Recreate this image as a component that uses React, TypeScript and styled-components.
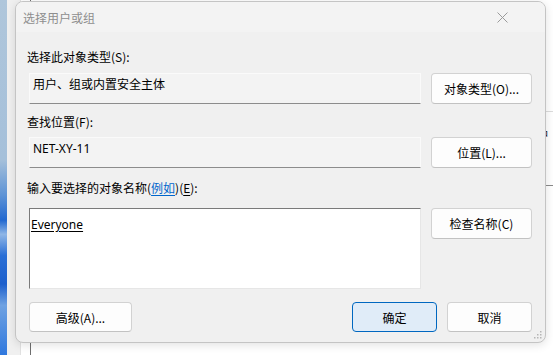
import React from 'react';
import styled, { createGlobalStyle } from 'styled-components';

const GlobalStyle = createGlobalStyle`
  html, body {
    margin: 0;
    padding: 0;
    width: 553px;
    height: 355px;
    overflow: hidden;
  }
  body {
    font-family: "Noto Sans", "Noto Sans CJK SC", sans-serif;
    font-size: 12px;
    color: #000;
  }
`;

const Desktop = styled.div`
  position: relative;
  width: 553px;
  height: 355px;
  overflow: hidden;
  background: linear-gradient(
    180deg,
    #afc6db 0%,
    #a5c0da 45%,
    #5d93d6 55%,
    #2268d0 62%,
    #8fb6e6 66%,
    #2a6fd6 72%,
    #1c5fcc 80%,
    #6fa2e2 86%,
    #2f78de 100%
  );
`;

// window lying behind the dialog
const BackWindow = styled.div`
  position: absolute;
  left: 7px;
  top: 0;
  right: -20px;
  bottom: 0;
  background: #f0f0f0;
`;

const BackPanel = styled.div`
  position: absolute;
  left: 13px;
  top: 0;
  right: 0;
  bottom: 0;
  background: #fff;
  border-left: 1px solid #e1e1e1;
`;

const BackList = styled.div`
  position: absolute;
  left: 9px;
  top: 0;
  right: 0;
  bottom: 0;
  border-left: 1px solid #6e6e6e;
`;

const BackRule = styled.div<{ $top: number; $dark?: boolean }>`
  position: absolute;
  left: 0;
  right: 0;
  top: ${(p) => p.$top}px;
  height: 1px;
  background: ${(p) => (p.$dark ? '#8a8a8a' : '#dcdcdc')};
`;

const BackColumn = styled.div`
  position: absolute;
  left: 518px;
  top: 204px;
  display: flex;
  flex-direction: column;
`;

const BackItem = styled.div`
  height: 21px;
  line-height: 21px;
  color: #1a1a40;
  font-size: 12px;
  white-space: nowrap;
`;

const BackHeading = styled.div`
  position: absolute;
  left: 518px;
  top: 128px;
  line-height: 16px;
  color: #222;
  white-space: nowrap;
`;

const Dialog = styled.div`
  position: absolute;
  left: 15px;
  top: 1px;
  width: 529px;
  height: 340px;
  background: #f0f0f0;
  border: 1px solid #c4c4c4;
  border-radius: 8px;
  box-shadow: 0 2px 10px rgba(0, 0, 0, 0.12);
  display: flex;
  flex-direction: column;
  overflow: hidden;
`;

const TitleBar = styled.div`
  height: 30px;
  flex: none;
  display: flex;
  align-items: center;
  justify-content: space-between;
  padding-left: 7px;
  background: #f3f3f3;
`;

const TitleText = styled.span`
  font-family: "Noto Sans CJK SC", sans-serif;
  font-size: 12px;
  line-height: 16px;
  color: #8e8e8e;
  margin-top: 1px;
`;

const CloseButton = styled.div`
  width: 12px;
  height: 12px;
  margin-right: 37px;
  margin-top: 1px;
  display: flex;
  align-items: center;
  justify-content: center;
`;

const Body = styled.div`
  flex: 1;
  display: flex;
  flex-direction: column;
  padding: 17px 12px 0 11px;
  position: relative;
`;

const Label = styled.div<{ $gap?: number }>`
  font-family: "Noto Sans CJK SC", sans-serif;
  line-height: 16px;
  height: 16px;
  margin-top: ${(p) => p.$gap ?? 0}px;
  white-space: nowrap;
`;

const Row = styled.div<{ $gap: number }>`
  display: grid;
  grid-template-columns: 392px 101px;
  column-gap: 10px;
  align-items: start;
  margin-top: ${(p) => p.$gap}px;
  margin-left: 2px;
`;

const ReadOnlyField = styled.div`
  box-sizing: border-box;
  height: 31px;
  padding: 3px 0 0 3px;
  background: #f3f3f3;
  border: 1px solid #fafafa;
  border-bottom-color: #8c8c8c;
  line-height: 16px;
  white-space: nowrap;
`;

const NameBox = styled.div`
  box-sizing: border-box;
  height: 81px;
  padding: 8px 0 0 1px;
  background: #fff;
  border: 1px solid #e6e6e6;
  border-top-color: #7a7a7a;
  border-left-color: #7a7a7a;
  line-height: 16px;
`;

const Resolved = styled.span`
  text-decoration: underline;
  text-underline-offset: 2px;
`;

const Button = styled.div<{ $width?: number; $primary?: boolean; $height?: number }>`
  box-sizing: border-box;
  width: ${(p) => (p.$width ? `${p.$width}px` : '100%')};
  height: ${(p) => p.$height ?? 31}px;
  display: flex;
  align-items: center;
  justify-content: center;
  font-family: "Noto Sans CJK SC", sans-serif;
  font-size: 12px;
  color: #000;
  background: ${(p) => (p.$primary ? '#e0ecf8' : '#fdfdfd')};
  border: 1px solid ${(p) => (p.$primary ? '#0067c0' : '#d2d2d2')};
  border-bottom-color: ${(p) => (p.$primary ? '#0067c0' : '#c2c2c2')};
  border-radius: 4px;
  white-space: nowrap;
`;

const Footer = styled.div`
  display: flex;
  align-items: center;
  margin-top: 13px;
  margin-left: 2px;
  width: 503px;
  gap: 10px;
`;

const Spacer = styled.div`
  flex: 1;
`;

const Link = styled.span`
  color: #0066cc;
  text-decoration: underline;
  text-underline-offset: 2px;
`;

const Key = styled.span`
  text-decoration: underline;
  text-underline-offset: 2px;
`;

const Grip = styled.svg`
  position: absolute;
  right: 3px;
  bottom: 3px;
`;

export default function App() {
  return (
    <>
      <GlobalStyle />
      <Desktop>
        <BackWindow>
          <BackPanel>
            <BackList>
              <BackRule $top={111} />
              <BackRule $top={185} $dark />
            </BackList>
          </BackPanel>
          <BackHeading>用户</BackHeading>
          <BackColumn>
            {['co', 'co', 'co', 'co', 'co', 'co'].map((t, i) => (
              <BackItem key={i}>{t}</BackItem>
            ))}
          </BackColumn>
        </BackWindow>

        <Dialog>
          <TitleBar>
            <TitleText>选择用户或组</TitleText>
            <CloseButton>
              <svg width="11" height="11" viewBox="0 0 11 11">
                <path d="M0.5 0.5 L10.5 10.5 M10.5 0.5 L0.5 10.5" stroke="#9a9a9a" strokeWidth="1" />
              </svg>
            </CloseButton>
          </TitleBar>
          <Body>
            <Label>选择此对象类型(S):</Label>
            <Row $gap={8}>
              <ReadOnlyField>用户、组或内置安全主体</ReadOnlyField>
              <Button>对象类型(O)...</Button>
            </Row>

            <Label $gap={10}>查找位置(F):</Label>
            <Row $gap={7}>
              <ReadOnlyField>NET-XY-11</ReadOnlyField>
              <Button>位置(L)...</Button>
            </Row>

            <Label $gap={12}>
              输入要选择的对象名称(<Link>例如</Link>)(<Key>E</Key>):
            </Label>
            <Row $gap={12}>
              <NameBox>
                <Resolved>Everyone</Resolved>
              </NameBox>
              <Button>检查名称(C)</Button>
            </Row>

            <Footer>
              <Button $width={103} $height={30}>高级(A)...</Button>
              <Spacer />
              <Button $width={85} $height={30} $primary>确定</Button>
              <Button $width={85} $height={30}>取消</Button>
            </Footer>

            <Grip width="8" height="8" viewBox="0 0 8 8">
              <g fill="#b5b5b5">
                <rect x="6" y="0" width="1.5" height="1.5" />
                <rect x="3" y="3" width="1.5" height="1.5" />
                <rect x="6" y="3" width="1.5" height="1.5" />
                <rect x="0" y="6" width="1.5" height="1.5" />
                <rect x="3" y="6" width="1.5" height="1.5" />
                <rect x="6" y="6" width="1.5" height="1.5" />
              </g>
            </Grip>
          </Body>
        </Dialog>
      </Desktop>
    </>
  );
}
